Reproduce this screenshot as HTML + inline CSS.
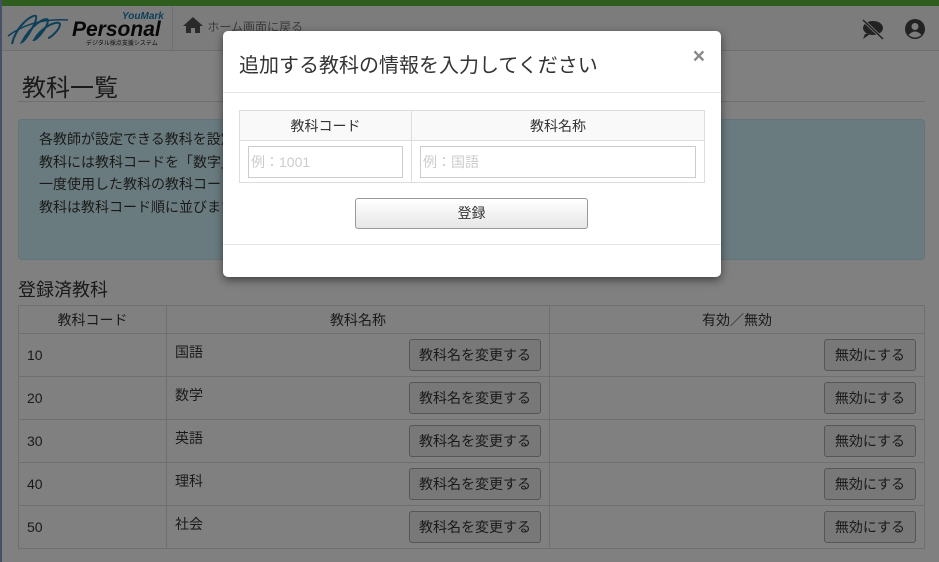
<!DOCTYPE html>
<html><head><meta charset="utf-8"><style>
*{box-sizing:border-box;margin:0;padding:0}
body{width:939px;height:562px;overflow:hidden;position:relative;background:#808080;font-family:"Liberation Sans","Noto Sans CJK JP",sans-serif;color:#1a1a1a;font-size:14px}
.green{position:absolute;left:0;top:0;width:939px;height:6px;background:#2f5d1e}
.leftb{position:absolute;left:0;top:0;width:2px;height:562px;background:#485068}
.hdr{position:absolute;left:0;top:6px;width:939px;height:45px;background:#7c7c7c;border-bottom:1px solid #6f6f6f}
.logo{position:absolute;left:2px;top:0;width:171px;height:44px;border-right:1px solid #6f6f6f}
.home{position:absolute;left:182px;top:10px;font-size:12px;color:#3b3b3b}
h1{position:absolute;left:22px;top:68px;font-size:24px;font-weight:normal;color:#1a1a1a}
.hr{position:absolute;left:18px;top:101px;width:907px;height:1px;background:#6f6f6f}
.info{position:absolute;left:18px;top:119px;width:907px;height:141px;background:#6a7b7f;border:1px solid #627478;border-radius:4px;color:#1a1a1a;padding:8px 20px;line-height:22.5px}
h2{position:absolute;left:18px;top:276px;font-size:18px;font-weight:normal}
table.m{position:absolute;left:18px;top:305px;width:907px;border-collapse:collapse}
table.m td,table.m th{border:1px solid #6f6f6f;font-weight:normal;font-size:14px}
table.m th{height:28px;text-align:center}
table.m td{height:43px;padding:0 8px;vertical-align:middle;position:relative}
.btn{display:inline-block;border:1px solid #565656;border-radius:3px;background:#787878;padding:0 9px;height:32px;line-height:30px;font-size:14px;color:#1a1a1a}
.nm{position:absolute;left:8px;top:8px}
.modal{position:absolute;left:223px;top:31px;width:498px;height:246px;background:#fff;border-radius:5px;z-index:30;box-shadow:0 3px 9px rgba(0,0,0,.5);color:#333}
.mh{height:62px;border-bottom:1px solid #e5e5e5;padding:18px 16px;font-size:20px;color:#333}
.x{position:absolute;right:16px;top:14px;font-size:21px;font-weight:bold;color:#888}
table.f{position:absolute;left:16px;top:79px;width:466px;border-collapse:collapse}
table.f th,table.f td{border:1px solid #ddd;font-weight:normal}
table.f th{height:30px;background:#f9f9f9;font-size:14px}
table.f td{height:42px;padding:4px 8px}
.inp{height:32px;border:1px solid #ccc;color:#ccc;font-size:14px;line-height:30px;padding-left:2px}
.reg{position:absolute;left:132px;top:167px;width:233px;height:31px;border:1px solid #999;border-radius:3px;background:linear-gradient(#fff,#e6e6e6);text-align:center;line-height:29px;font-size:14px}
.mf{position:absolute;left:0;top:213px;width:498px;height:1px;background:#e5e5e5}
.b2{padding:0 10px}
</style></head><body>
<div class="green"></div>
<div class="hdr">
<div class="logo"><svg width="171" height="44"><path d="M10 38 C14 20 30 8 34 10 C36 14 24 34 20 36 C28 20 44 10 46 14 C46 22 34 34 32 34 C40 20 56 14 58 18 C58 24 48 32 46 32" fill="none" stroke="#0e405a" stroke-width="2"/><path d="M6 30 Q30 12 66 14" fill="none" stroke="#0e405a" stroke-width="1.5"/>
<text x="120" y="13" font-size="10" font-style="italic" font-weight="bold" fill="#0e405a" font-family="Liberation Sans">YouMark</text>
<text x="70" y="30" font-size="21" font-style="italic" font-weight="bold" fill="#080808" font-family="Liberation Sans">Personal</text>
<text x="84" y="39" font-size="6" fill="#080808" font-family="Noto Sans CJK JP">デジタル採点支援システム</text></svg></div>
<div class="home"><svg width="22" height="18" style="vertical-align:-3px"><path d="M11 1 L1 10 H4 V17 H9 V12 H13 V17 H18 V10 H21Z" fill="#2a2a2a"/></svg> ホーム画面に戻る</div>
<svg style="position:absolute;left:860px;top:12px" width="26" height="22"><ellipse cx="13" cy="10" rx="10" ry="7" fill="#222"/><path d="M5 16 L3 21 L10 16Z" fill="#222"/><path d="M3 2 L23 21" stroke="#7c7c7c" stroke-width="3"/><path d="M3 2 L23 21" stroke="#222" stroke-width="1.5"/></svg>
<svg style="position:absolute;left:904px;top:12px" width="22" height="22"><circle cx="11" cy="11" r="10" fill="#222"/><circle cx="11" cy="8.5" r="3.5" fill="#7c7c7c"/><path d="M4.5 17 Q11 10 17.5 17 Q11 22 4.5 17Z" fill="#7c7c7c"/></svg>
</div>
<div class="leftb"></div>
<h1>教科一覧</h1><div class="hr"></div>
<div class="info">各教師が設定できる教科を設定します。<br>教科には教科コードを「数字」で設定してください（教科コードは後から変更することもできません）<br>一度使用した教科の教科コードは変更できません。<br>教科は教科コード順に並びます。</div>
<h2>登録済教科</h2>
<table class="m">
<tr><th style="width:148px">教科コード</th><th style="width:383px">教科名称</th><th>有効／無効</th></tr>
<tr><td>10</td><td><span class="nm">国語</span><div style="text-align:right"><span class="btn">教科名を変更する</span></div></td><td style="text-align:right"><span class="btn b2">無効にする</span></td></tr>
<tr><td>20</td><td><span class="nm">数学</span><div style="text-align:right"><span class="btn">教科名を変更する</span></div></td><td style="text-align:right"><span class="btn b2">無効にする</span></td></tr>
<tr><td>30</td><td><span class="nm">英語</span><div style="text-align:right"><span class="btn">教科名を変更する</span></div></td><td style="text-align:right"><span class="btn b2">無効にする</span></td></tr>
<tr><td>40</td><td><span class="nm">理科</span><div style="text-align:right"><span class="btn">教科名を変更する</span></div></td><td style="text-align:right"><span class="btn b2">無効にする</span></td></tr>
<tr><td>50</td><td><span class="nm">社会</span><div style="text-align:right"><span class="btn">教科名を変更する</span></div></td><td style="text-align:right"><span class="btn b2">無効にする</span></td></tr>
</table>
<div class="modal">
<div class="mh">追加する教科の情報を入力してください</div><div class="x">×</div>
<table class="f"><tr><th style="width:172px">教科コード</th><th>教科名称</th></tr>
<tr><td><div class="inp">例：1001</div></td><td><div class="inp">例：国語</div></td></tr></table>
<div class="reg">登録</div>
<div class="mf"></div>
</div>
</body></html>
